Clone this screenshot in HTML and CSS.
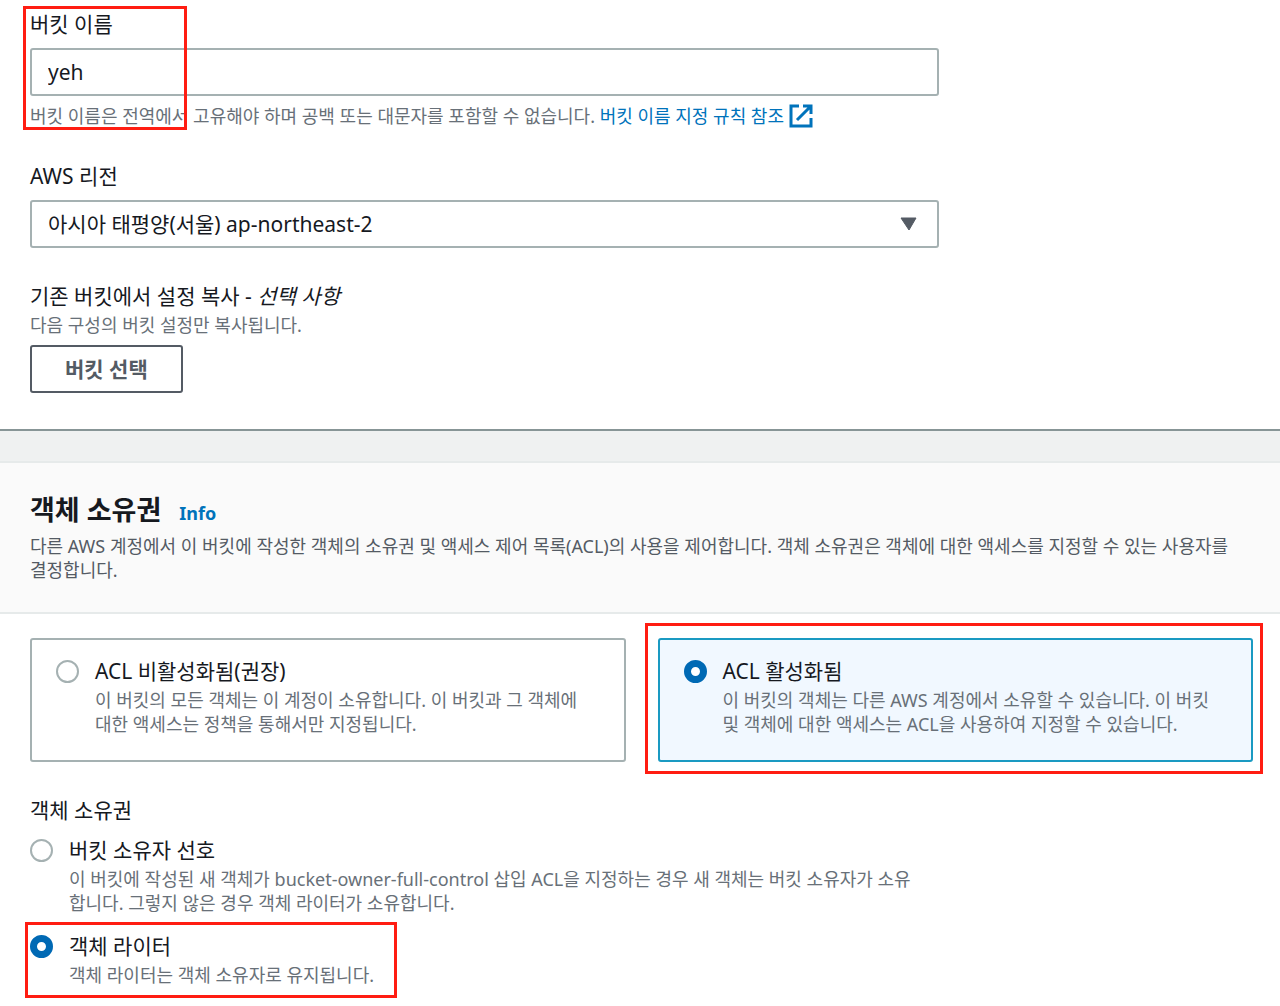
FILE: index.html
```html
<!DOCTYPE html>
<html lang="ko">
<head>
  <meta charset="UTF-8">
  <meta name="viewport" content="width=device-width, initial-scale=1">
  <title>버킷 만들기</title>
  <link rel="stylesheet" href="styles.css">
</head>
<body>
  <section class="panel general">
    <div class="field marked mark-name">
      <label class="label" for="bucket-name">버킷 이름</label>
      <input class="control" type="text" id="bucket-name" value="yeh">
      <p class="hint">버킷 이름은 전역에서 고유해야 하며 공백 또는 대문자를 포함할 수 없습니다.
        <a href="#rules">버킷 이름 지정 규칙 참조
          <svg class="external" viewBox="0 0 24 24" aria-hidden="true">
            <path d="M10 2H2v20h20v-8M14 2h8v8M21 3 8 16" fill="none" stroke="currentColor" stroke-width="3"/>
            <path d="M17 1h6v6z" fill="currentColor"/>
          </svg></a>
      </p>
    </div>

    <div class="field">
      <label class="label" for="region">AWS 리전</label>
      <div class="select">
        <select class="control" id="region">
          <option>아시아 태평양(서울) ap-northeast-2</option>
        </select>
        <svg class="caret" viewBox="0 0 18 14" aria-hidden="true">
          <path d="M2 1h15l-7 12z" fill="#545b64" stroke="#545b64" stroke-width="1" stroke-linejoin="round"/>
        </svg>
      </div>
    </div>

    <div class="field">
      <h3 class="label">기존 버킷에서 설정 복사 - <em>선택 사항</em></h3>
      <p class="description">다음 구성의 버킷 설정만 복사됩니다.</p>
      <button class="button" type="button">버킷 선택</button>
    </div>
  </section>

  <section class="panel ownership">
    <header class="panel-header">
      <div class="title">
        <h2>객체 소유권</h2>
        <a href="#info">Info</a>
      </div>
      <p>다른 AWS 계정에서 이 버킷에 작성한 객체의 소유권 및 액세스 제어 목록(ACL)의 사용을 제어합니다. 객체 소유권은 객체에 대한 액세스를 지정할 수 있는 사용자를 결정합니다.</p>
    </header>

    <div class="panel-body">
      <div class="tiles">
        <label class="tile">
          <input type="radio" name="acl">
          <span class="option">
            <span class="option-title">ACL 비활성화됨(권장)</span>
            <span class="description">이 버킷의 모든 객체는 이 계정이 소유합니다. 이 버킷과 그 객체에 대한 액세스는 정책을 통해서만 지정됩니다.</span>
          </span>
        </label>
        <label class="tile selected marked mark-tile">
          <input type="radio" name="acl" checked>
          <span class="option">
            <span class="option-title">ACL 활성화됨</span>
            <span class="description">이 버킷의 객체는 다른 AWS 계정에서 소유할 수 있습니다. 이 버킷 및 객체에 대한 액세스는 ACL을 사용하여 지정할 수 있습니다.</span>
          </span>
        </label>
      </div>

      <fieldset class="owner">
        <legend class="label">객체 소유권</legend>
        <label class="radio">
          <input type="radio" name="owner">
          <span class="option">
            <span class="option-title">버킷 소유자 선호</span>
            <span class="description">이 버킷에 작성된 새 객체가 bucket-owner-full-control 삽입 ACL을 지정하는 경우 새 객체는 버킷 소유자가 소유합니다. 그렇지 않은 경우 객체 라이터가 소유합니다.</span>
          </span>
        </label>
        <label class="radio marked mark-writer">
          <input type="radio" name="owner" checked>
          <span class="option">
            <span class="option-title">객체 라이터</span>
            <span class="description">객체 라이터는 객체 소유자로 유지됩니다.</span>
          </span>
        </label>
      </fieldset>
    </div>
  </section>
</body>
</html>
```

FILE: styles.css
```css
*, *::after {
  box-sizing: border-box;
}
body {
  margin: 0;
  background: #fff;
  color: #16191f;
  font-family: "Noto Sans", "Noto Sans CJK KR", sans-serif;
  font-size: 18px;
  line-height: 24px;
}
h2, h3, p {
  margin: 0;
}
a {
  color: #0073bb;
  text-decoration: none;
}

/* form fields */
.general {
  display: flex;
  flex-direction: column;
  gap: 32px;
  padding: 8px 30px 36px;
  border-bottom: 2px solid #879596;
}
.field {
  max-width: 909px;
}
.label {
  display: block;
  padding: 0;
  font-size: 21px;
  font-weight: 400;
  line-height: 32px;
}
.control {
  display: block;
  width: 100%;
  height: 48px;
  margin-top: 8px;
  padding: 0 16px;
  border: 2px solid #a5b1b2;
  border-radius: 3px;
  background: #fff;
  color: #16191f;
  font-family: inherit;
  font-size: 21px;
  appearance: none;
}
.hint {
  margin-top: 8px;
  color: #687078;
}
.description {
  display: block;
  color: #687078;
}
h3 + .description {
  margin-top: 1px;
}
.external {
  width: 24px;
  height: 24px;
  vertical-align: top;
}
.select {
  position: relative;
}
.caret {
  position: absolute;
  top: 17px;
  right: 22px;
  width: 18px;
  height: 14px;
  pointer-events: none;
}
.button {
  display: block;
  height: 48px;
  margin-top: 8px;
  padding: 0 33px;
  border: 2px solid #545b64;
  border-radius: 3px;
  background: #fff;
  color: #545b64;
  font-family: inherit;
  font-size: 21px;
  font-weight: 700;
  line-height: 38px;
}

/* object ownership */
.ownership {
  border-top: 30px solid #eff1f1;
}
.panel-header {
  padding: 28px 40px 30px 30px;
  border-top: 2px solid #e6eaea;
  border-bottom: 2px solid #e6eaea;
  background: #fafafa;
  color: #545b64;
}
.title {
  display: flex;
  align-items: baseline;
  gap: 18px;
  margin-bottom: 2px;
  line-height: 38px;
}
.title h2 {
  color: #16191f;
  font-size: 27px;
}
.title a {
  font-weight: 700;
}
.panel-body {
  padding: 24px 27px 19px 30px;
}
.tiles {
  display: grid;
  grid-template-columns: 1fr 1fr;
  gap: 32px;
}
.tile, .radio {
  display: flex;
  gap: 16px;
}
.tile {
  padding: 15px 40px 24px 24px;
  border: 2px solid #a5b1b2;
  border-radius: 3px;
}
.tile.selected {
  border-color: #1a9ac2;
  background: #f1f8ff;
}
input[type="radio"] {
  flex: none;
  width: 23px;
  height: 23px;
  margin: 5px 0 0;
  border: 2px solid #a5b1b2;
  border-radius: 50%;
  background: #fff;
  appearance: none;
}
input[type="radio"]:checked {
  border: 7px solid #0069b4;
}
.option-title {
  display: block;
  font-size: 21px;
  line-height: 33px;
}
.owner {
  display: flex;
  flex-direction: column;
  gap: 15px;
  max-width: 890px;
  margin: 32px 0 0;
  padding: 0;
  border: 0;
}
.owner .label {
  margin-bottom: 8px;
}

/* red callouts */
.marked {
  position: relative;
}
.marked::after {
  content: "";
  position: absolute;
  border: 3px solid #ff1d12;
  pointer-events: none;
}
.mark-name::after {
  top: -2px;
  left: -7px;
  width: 164px;
  height: 124px;
}
.mark-tile::after {
  inset: -17px -12px -14px -15px;
}
.mark-writer::after {
  top: -8px;
  left: -5px;
  width: 372px;
  height: 76px;
}
```
